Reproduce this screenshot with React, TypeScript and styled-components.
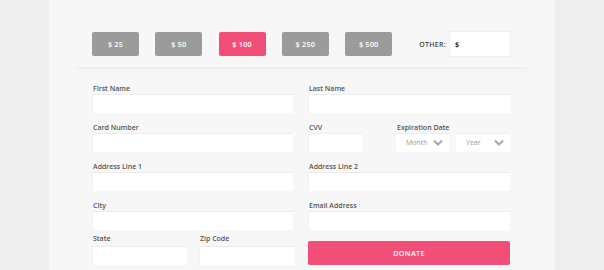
import styled, { createGlobalStyle } from "styled-components";

const GlobalStyle = createGlobalStyle`
  html, body {
    margin: 0;
    padding: 0;
    background: #eeeeee;
    font-family: "Open Sans", Lato, "Liberation Sans", sans-serif;
  }
`;

const SPage = styled.div`
  width: 604px;
  height: 270px;
  overflow: hidden;
  display: flex;
  justify-content: center;
`;

const SPanel = styled.div`
  width: 506px;
  background: #f7f7f7;
  display: flex;
  flex-direction: column;
`;

const SAmounts = styled.div`
  display: flex;
  align-items: center;
  padding: 32px 0 11px 21px;
  margin: 0 22px;
  box-shadow: 0 5px 6px -5px rgba(0, 0, 0, 0.09);
`;

const SAmountList = styled.div`
  display: flex;
  gap: 16.3px;
`;

const SAmountButton = styled.button<{ $active?: boolean }>`
  width: 47px;
  height: 24px;
  border: none;
  border-radius: 2px;
  padding: 0;
  background: ${(p) => (p.$active ? "#f24f78" : "#9b9b9b")};
  color: #ffffff;
  font-family: inherit;
  font-size: 7.3px;
  font-weight: 600;
  letter-spacing: 0.2px;
`;

const SOther = styled.div`
  display: flex;
  align-items: center;
  margin-left: 27px;
  gap: 4px;
`;

const SOtherLabel = styled.span`
  font-size: 7px;
  font-weight: 600;
  color: #444444;
  letter-spacing: 0.3px;
`;

const SOtherInput = styled.div`
  width: 55px;
  height: 24px;
  background: #ffffff;
  box-shadow: 0 0 0 1px #f0f0f0;
  display: flex;
  align-items: center;
  padding-left: 5px;
  font-size: 7px;
  font-weight: 700;
  color: #333333;
`;

const SForm = styled.div`
  display: flex;
  flex-direction: column;
  padding: 17px 0 0 43px;
`;

const SRow = styled.div<{ $gap?: number }>`
  display: grid;
  grid-template-columns: 201px 202px;
  column-gap: 15px;
  margin-top: ${(p) => p.$gap ?? 0}px;
  align-items: end;
`;

const SSplit = styled.div<{ $cols: string; $gap: number }>`
  display: grid;
  grid-template-columns: ${(p) => p.$cols};
  column-gap: ${(p) => p.$gap}px;
  align-items: end;
`;

const SField = styled.div<{ $space?: number }>`
  display: flex;
  flex-direction: column;
  gap: ${(p) => p.$space ?? 1}px;
`;

const SLabel = styled.label`
  font-size: 7px;
  line-height: 9px;
  font-weight: 600;
  color: #555555;
  padding-left: 1px;
  white-space: nowrap;
`;

const SInput = styled.div`
  height: 19px;
  background: #ffffff;
  box-shadow: inset 0 1px 0 #ececec, inset 1px 0 0 #f2f2f2;
`;

const SSelectPair = styled.div`
  display: grid;
  grid-template-columns: 53px 54px;
  column-gap: 7px;
`;

const SSelect = styled.div`
  height: 19px;
  background: #ffffff;
  box-shadow: inset 0 1px 0 #ececec;
  display: flex;
  align-items: center;
  justify-content: space-between;
  padding: 0 6px 0 10px;
  font-size: 7px;
  color: #9a9a9a;
`;

const SDonate = styled.button`
  height: 24px;
  border: none;
  border-radius: 2px;
  background: #f24f78;
  color: #ffffff;
  font-family: inherit;
  font-size: 7.3px;
  font-weight: 600;
  letter-spacing: 0.3px;
`;

const Chevron = () => (
  <svg width="10" height="7" viewBox="0 0 10 7">
    <path d="M1 1.5 L5 5.5 L9 1.5" fill="none" stroke="#a8a8a8" strokeWidth="2" />
  </svg>
);

const Field = ({ label, space }: { label: string; space?: number }) => (
  <SField $space={space}>
    <SLabel>{label}</SLabel>
    <SInput />
  </SField>
);

const amounts = ["$ 25", "$ 50", "$ 100", "$ 250", "$ 500"];

export default function App() {
  return (
    <>
      <GlobalStyle />
      <SPage>
        <SPanel>
          <SAmounts>
            <SAmountList>
              {amounts.map((a) => (
                <SAmountButton key={a} $active={a === "$ 100"}>
                  {a}
                </SAmountButton>
              ))}
            </SAmountList>
            <SOther>
              <SOtherLabel>OTHER:</SOtherLabel>
              <SOtherInput>$</SOtherInput>
            </SOther>
          </SAmounts>
          <SForm>
            <SRow>
              <Field label="First Name" />
              <Field label="Last Name" />
            </SRow>
            <SRow $gap={10}>
              <Field label="Card Number" />
              <SSplit $cols="54px 114px" $gap={34}>
                <Field label="CVV" />
                <SField>
                  <SLabel>Expiration Date</SLabel>
                  <SSelectPair>
                    <SSelect>
                      Month <Chevron />
                    </SSelect>
                    <SSelect>
                      Year <Chevron />
                    </SSelect>
                  </SSelectPair>
                </SField>
              </SSplit>
            </SRow>
            <SRow $gap={10}>
              <Field label="Address Line 1" />
              <Field label="Address Line 2" />
            </SRow>
            <SRow $gap={10}>
              <Field label="City" />
              <Field label="Email Address" />
            </SRow>
            <SRow $gap={4}>
              <SSplit $cols="95px 95px" $gap={12}>
                <Field label="State" space={3} />
                <Field label="Zip Code" space={3} />
              </SSplit>
              <SDonate>DONATE</SDonate>
            </SRow>
          </SForm>
        </SPanel>
      </SPage>
    </>
  );
}
